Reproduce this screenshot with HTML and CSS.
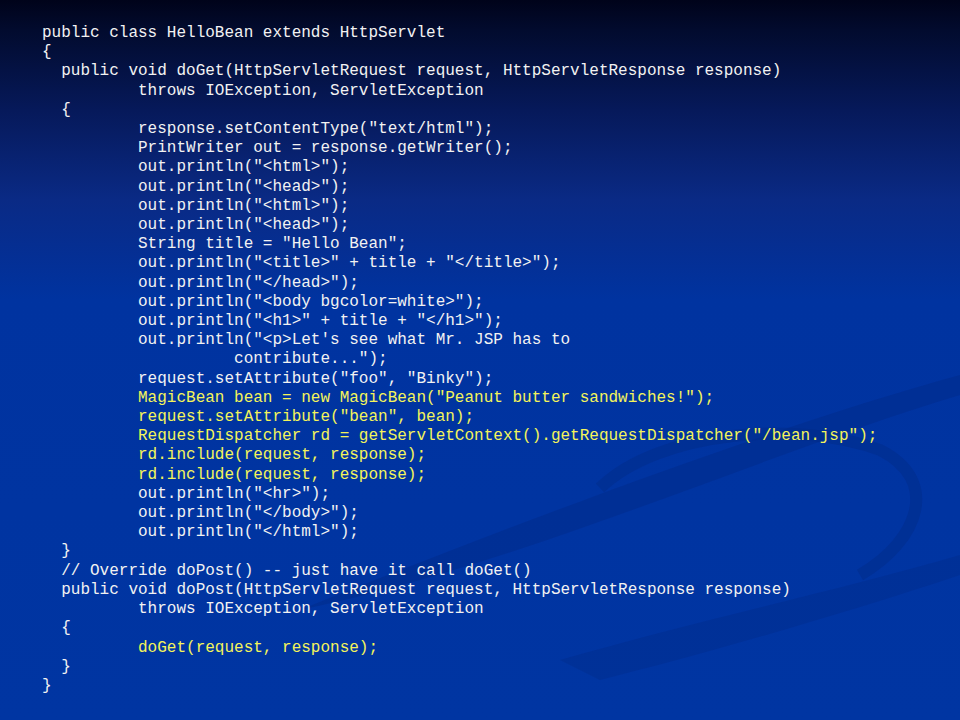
FILE: index.html
```html
<html>
<head>
	<title>HelloBean</title>
	<meta http-equiv="content-type" content="text/html;charset=utf-8">
	<link rel="stylesheet" href="styles.css">
</head>
<body>
	<div class="slide">
		<!-- 背景弧线 -->
		<svg class="swoosh" width="960" height="720" viewBox="0 0 960 720">
			<path d="M300 610 C 500 530, 760 430, 960 375 L 960 395 C 760 455, 520 565, 300 610 Z" fill="#002a88" opacity="0.45"/>
			<path d="M600 488 C 660 430, 800 420, 880 450 C 940 480, 920 540, 860 575" fill="none" stroke="#002b8a" stroke-width="12" opacity="0.5"/>
			<path d="M560 660 C 700 620, 840 590, 960 555 L 960 575 C 840 615, 700 655, 600 680 Z" fill="#002d8c" opacity="0.45"/>
		</svg>
		<pre class="code">public class HelloBean extends HttpServlet
{
  public void doGet(HttpServletRequest request, HttpServletResponse response)
          throws IOException, ServletException
  {
          response.setContentType("text/html");
          PrintWriter out = response.getWriter();
          out.println("&lt;html&gt;");
          out.println("&lt;head&gt;");
          out.println("&lt;html&gt;");
          out.println("&lt;head&gt;");
          String title = "Hello Bean";
          out.println("&lt;title&gt;" + title + "&lt;/title&gt;");
          out.println("&lt;/head&gt;");
          out.println("&lt;body bgcolor=white&gt;");
          out.println("&lt;h1&gt;" + title + "&lt;/h1&gt;");
          out.println("&lt;p&gt;Let's see what Mr. JSP has to
                    contribute...");
          request.setAttribute("foo", "Binky");
<span class="hl">          MagicBean bean = new MagicBean("Peanut butter sandwiches!");
          request.setAttribute("bean", bean);
          RequestDispatcher rd = getServletContext().getRequestDispatcher("/bean.jsp");
          rd.include(request, response);
          rd.include(request, response);</span>
          out.println("&lt;hr&gt;");
          out.println("&lt;/body&gt;");
          out.println("&lt;/html&gt;");
  }
  // Override doPost() -- just have it call doGet()
  public void doPost(HttpServletRequest request, HttpServletResponse response)
          throws IOException, ServletException
  {
<span class="hl">          doGet(request, response);</span>
  }
}</pre>
	</div>
</body>
</html>
```

FILE: styles.css
```css
body {
	margin: 0;
	background: #0033a0;
}
.slide {
	width: 960px;
	height: 720px;
	position: relative;
	overflow: hidden;
	background: linear-gradient(to bottom, #00031a 0px, #020b2e 30px, #06195a 110px, #0a2a85 200px, #0033a0 300px, #0035a2 720px);
}
.swoosh {
	position: absolute;
	left: 0;
	top: 0;
}
.code {
	position: relative;
	margin: 0;
	padding: 24px 0 0 42px;
	font-family: "Liberation Mono", "Courier New", monospace;
	font-size: 16px;
	line-height: 19.2px;
	color: #f2f2f2;
}
.hl {
	color: #f4f45a;
}
```
